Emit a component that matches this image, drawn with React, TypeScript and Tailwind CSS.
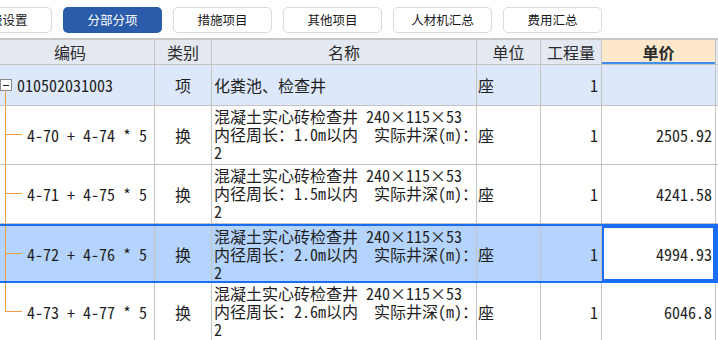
import React from "react";

type RowData = {
  code: string;
  type: string;
  name: string[];
  unit: string;
  qty: string;
  price: string;
  kind: "parent" | "child" | "last";
  selected?: boolean;
};

const rows: RowData[] = [
  { code: "010502031003", type: "项", name: ["化粪池、检查井"], unit: "座", qty: "1", price: "", kind: "parent" },
  { code: "4-70 + 4-74 * 5", type: "换", name: ["混凝土实心砖检查井 240×115×53", "内径周长：1.0m以内  实际井深(m)：", "2"], unit: "座", qty: "1", price: "2505.92", kind: "child" },
  { code: "4-71 + 4-75 * 5", type: "换", name: ["混凝土实心砖检查井 240×115×53", "内径周长：1.5m以内  实际井深(m)：", "2"], unit: "座", qty: "1", price: "4241.58", kind: "child" },
  { code: "4-72 + 4-76 * 5", type: "换", name: ["混凝土实心砖检查井 240×115×53", "内径周长：2.0m以内  实际井深(m)：", "2"], unit: "座", qty: "1", price: "4994.93", kind: "child", selected: true },
  { code: "4-73 + 4-77 * 5", type: "换", name: ["混凝土实心砖检查井 240×115×53", "内径周长：2.6m以内  实际井深(m)：", "2"], unit: "座", qty: "1", price: "6046.8", kind: "last" },
];

const gridCols = "grid grid-cols-[155px_57px_265px_64px_61px_114px_1fr]";
const cellB = "border-r border-[#c3c3c3] overflow-hidden";

function Connector({ kind }: { kind: RowData["kind"] }) {
  if (kind === "parent") {
    return (
      <div className="flex w-[12px] flex-col self-stretch">
        <div className="flex-1" />
        <div className="flex h-[12px] w-[12px] items-center justify-center border border-[#8a8a8a] bg-white">
          <div className="h-[1px] w-[6px] bg-[#222]" />
        </div>
        <div className="ml-[5px] flex-1 border-l border-[#f39b42]" />
      </div>
    );
  }
  return (
    <div className="ml-[5px] flex w-[17px] flex-col self-stretch">
      <div className="h-1/2 border-b border-l border-[#f39b42]" />
      <div className={kind === "last" ? "flex-1" : "flex-1 border-l border-[#f39b42]"} />
    </div>
  );
}

function Row({ r }: { r: RowData }) {
  const bg = r.selected ? "bg-[#b4d4fd]" : r.kind === "parent" ? "bg-[#dde8fb]" : "bg-white";
  const rowCls = r.selected
    ? "h-[59px] border-y-2 border-[#1a6ef5]"
    : r.kind === "parent"
    ? "h-[41px] border-b border-[#c3c3c3]"
    : "h-[59px] border-b border-[#c3c3c3]";
  return (
    <div className={`${gridCols} ${rowCls} ${bg}`}>
      <div className={`${cellB} flex items-center`}>
        <Connector kind={r.kind} />
        <span className={r.kind === "parent" ? "ml-[5px] whitespace-pre" : "ml-[5px] whitespace-pre"}>{r.code}</span>
      </div>
      <div className={`${cellB} flex items-center justify-center`}>{r.type}</div>
      <div
        className={`${cellB} flex flex-col pl-[2px] leading-[18px] ${
          r.kind === "parent" ? "justify-center" : "justify-start pt-[1px]"
        }`}
      >
        {r.name.map((l, i) => (
          <div key={i} className="whitespace-pre">
            {l}
          </div>
        ))}
      </div>
      <div className={`${cellB} flex items-center pl-[1px]`}>{r.unit}</div>
      <div className={`${cellB} flex items-center justify-end pr-[3px]`}>{r.qty}</div>
      <div
        className={
          r.selected
            ? "flex items-center justify-end border-r border-[#1a6ef5] bg-white pr-[3px] shadow-[inset_0_0_0_2px_#1a6ef5]"
            : `${cellB} flex items-center justify-end pr-[3px]`
        }
      >
        {r.price}
      </div>
      <div className={r.selected ? "bg-[#1a6ef5]" : ""} />
    </div>
  );
}

function TabButton({ label, active, className = "" }: { label: string; active?: boolean; className?: string }) {
  return (
    <div
      className={`flex h-[26px] w-[99px] shrink-0 items-center justify-center rounded-[5px] text-[12.5px] ${
        active ? "bg-[#2b5cab] text-white" : "border border-[#dadada] bg-white text-[#1a1a1a]"
      } ${className}`}
    >
      {label}
    </div>
  );
}

export default function App() {
  return (
    <div className="h-[340px] w-[718px] overflow-hidden bg-white font-['Noto_Sans_CJK_SC',sans-serif]">
      <div className="flex h-[38px] items-start gap-[11px] pt-[7px]">
        <TabButton label="取费设置" className="ml-[-47px]" />
        <TabButton label="分部分项" active />
        <TabButton label="措施项目" />
        <TabButton label="其他项目" />
        <TabButton label="人材机汇总" />
        <TabButton label="费用汇总" />
      </div>
      <div className="border-t-2 border-[#c6c6c6] font-['Noto_Sans_Mono_CJK_SC','Noto_Sans_CJK_SC',monospace] text-[16px] text-[#1e1e1e]">
        <div className={`${gridCols} h-[25px] border-b border-[#c3c3c3] bg-[#e4e9f1] text-[#2a2a2a]`}>
          <div className={`${cellB} flex items-center justify-center pr-[14px]`}>编码</div>
          <div className={`${cellB} flex items-center justify-center`}>类别</div>
          <div className={`${cellB} flex items-center justify-center`}>名称</div>
          <div className={`${cellB} flex items-center justify-center`}>单位</div>
          <div className={`${cellB} flex items-center justify-center`}>工程量</div>
          <div className={`${cellB} flex items-center justify-center bg-[#fde8cb] font-bold shadow-[inset_0_-2px_0_#3d90f0]`}>
            单价
          </div>
          <div />
        </div>
        {rows.map((r, i) => (
          <Row key={i} r={r} />
        ))}
      </div>
    </div>
  );
}
